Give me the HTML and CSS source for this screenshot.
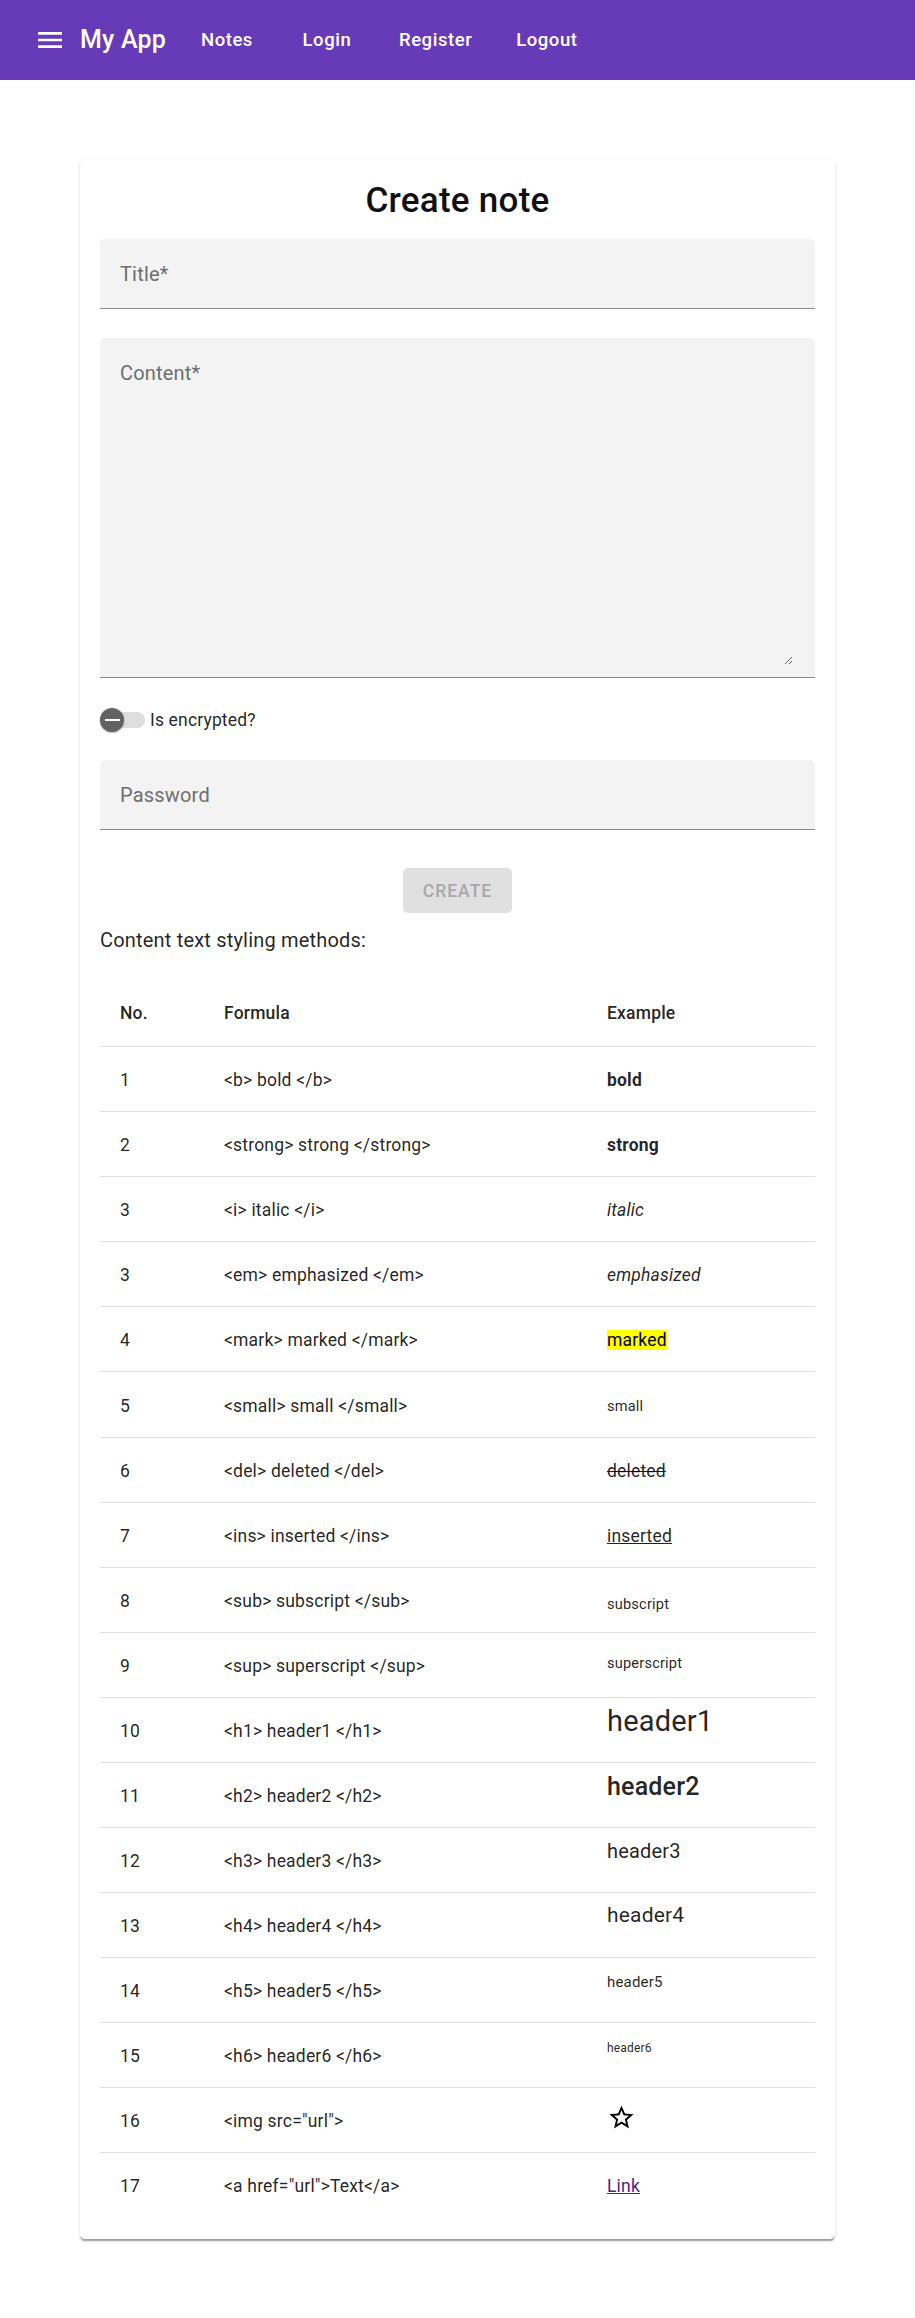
FILE: index.html
```html
<!DOCTYPE html>
<html lang="en">
<head>
<meta charset="utf-8">
<title>My App</title>
<link rel="stylesheet" href="styles.css">
</head>
<body>
<header class="appbar">
  <button class="menu-btn" type="button" aria-label="menu">
    <svg class="menu-icon" viewBox="0 0 24 24" width="32" height="32"><path d="M3 18h18v-2H3v2zm0-5h18v-2H3v2zm0-7v2h18V6H3z"/></svg>
  </button>
  <div class="brand">My App</div>
  <nav class="nav">
    <a class="nav-btn" href="#">Notes</a>
    <a class="nav-btn" href="#">Login</a>
    <a class="nav-btn" href="#">Register</a>
    <a class="nav-btn" href="#">Logout</a>
  </nav>
</header>

<main class="page">
  <section class="card">
    <h1 class="card-title">Create note</h1>

    <div class="field field-title">
      <input class="field-input" type="text" placeholder="Title*">
    </div>

    <div class="field field-content">
      <textarea class="field-textarea" placeholder="Content*"></textarea>
    </div>

    <label class="switch">
      <span class="switch-ctl">
        <input class="switch-input" type="checkbox">
        <span class="switch-track"></span>
        <span class="switch-thumb"><span class="switch-minus"></span></span>
      </span>
      <span class="switch-text">Is encrypted?</span>
    </label>

    <div class="field field-password">
      <input class="field-input" type="password" placeholder="Password">
    </div>

    <button class="create-btn" type="button" disabled>CREATE</button>

    <p class="methods-label">Content text styling methods:</p>

    <table class="methods">
      <colgroup>
        <col class="col-no">
        <col class="col-formula">
        <col class="col-example">
      </colgroup>
      <thead>
        <tr><th>No.</th><th>Formula</th><th>Example</th></tr>
      </thead>
      <tbody>
        <tr><td>1</td><td>&lt;b&gt; bold &lt;/b&gt;</td><td><b>bold</b></td></tr>
        <tr><td>2</td><td>&lt;strong&gt; strong &lt;/strong&gt;</td><td><strong>strong</strong></td></tr>
        <tr><td>3</td><td>&lt;i&gt; italic &lt;/i&gt;</td><td><i>italic</i></td></tr>
        <tr><td>3</td><td>&lt;em&gt; emphasized &lt;/em&gt;</td><td><em>emphasized</em></td></tr>
        <tr><td>4</td><td>&lt;mark&gt; marked &lt;/mark&gt;</td><td><mark class="ex-mark">marked</mark></td></tr>
        <tr><td>5</td><td>&lt;small&gt; small &lt;/small&gt;</td><td><small class="ex-small">small</small></td></tr>
        <tr><td>6</td><td>&lt;del&gt; deleted &lt;/del&gt;</td><td><del>deleted</del></td></tr>
        <tr><td>7</td><td>&lt;ins&gt; inserted &lt;/ins&gt;</td><td><ins>inserted</ins></td></tr>
        <tr><td>8</td><td>&lt;sub&gt; subscript &lt;/sub&gt;</td><td><sub class="ex-sub">subscript</sub></td></tr>
        <tr><td>9</td><td>&lt;sup&gt; superscript &lt;/sup&gt;</td><td><sup class="ex-sup">superscript</sup></td></tr>
        <tr><td>10</td><td>&lt;h1&gt; header1 &lt;/h1&gt;</td><td class="ex-top"><h1 class="ex-h ex-h1">header1</h1></td></tr>
        <tr><td>11</td><td>&lt;h2&gt; header2 &lt;/h2&gt;</td><td class="ex-top"><h2 class="ex-h ex-h2">header2</h2></td></tr>
        <tr><td>12</td><td>&lt;h3&gt; header3 &lt;/h3&gt;</td><td class="ex-top"><h3 class="ex-h ex-h3">header3</h3></td></tr>
        <tr><td>13</td><td>&lt;h4&gt; header4 &lt;/h4&gt;</td><td class="ex-top"><h4 class="ex-h ex-h4">header4</h4></td></tr>
        <tr><td>14</td><td>&lt;h5&gt; header5 &lt;/h5&gt;</td><td class="ex-top"><h5 class="ex-h ex-h5">header5</h5></td></tr>
        <tr><td>15</td><td>&lt;h6&gt; header6 &lt;/h6&gt;</td><td class="ex-top"><h6 class="ex-h ex-h6">header6</h6></td></tr>
        <tr><td>16</td><td>&lt;img src="url"&gt;</td><td class="ex-top"><svg class="ex-star" viewBox="0 0 24 24" width="29" height="29" role="img" aria-label="star"><path d="M22 9.24l-7.19-.62L12 2 9.19 8.63 2 9.24l5.46 4.73L5.82 21 12 17.27 18.18 21l-1.63-7.03L22 9.24zM12 15.4l-3.76 2.27 1-4.28-3.32-2.88 4.38-.38L12 6.1l1.71 4.040 4.38.38-3.32 2.88 1 4.28L12 15.4z"/></svg></td></tr>
        <tr><td>17</td><td>&lt;a href="url"&gt;Text&lt;/a&gt;</td><td><a class="ex-link" href="#">Link</a></td></tr>
      </tbody>
    </table>
  </section>
</main>
</body>
</html>
```

FILE: styles.css
```css
* {
  box-sizing: border-box;
}

body {
  margin: 0;
  background: #ffffff;
  font-family: Roboto, "Noto Sans", Arial, sans-serif;
  color: rgba(0, 0, 0, 0.87);
}

/* ---------- App bar ---------- */
.appbar {
  display: flex;
  align-items: center;
  height: 80px;
  padding-left: 34px;
  background: #673ab7;
  color: #ffffff;
}

.menu-btn {
  display: flex;
  width: 32px;
  height: 32px;
  padding: 0;
  margin-right: 14px;
  border: 0;
  background: none;
}

.menu-icon {
  fill: #ffffff;
}

.brand {
  font-size: 25px;
  font-weight: 500;
  letter-spacing: 0.19px;
  line-height: 1.6;
  margin-right: 21px;
}

.nav {
  display: flex;
  gap: 20px;
}

.nav-btn {
  display: inline-flex;
  align-items: center;
  justify-content: center;
  min-width: 80px;
  height: 45px;
  padding: 0 12px;
  color: #ffffff;
  text-decoration: none;
  font-size: 18.5px;
  font-weight: 500;
  letter-spacing: 0.55px;
}

/* ---------- Card ---------- */
.page {
  padding: 80px 80px 80px;
}

.card {
  display: flex;
  flex-direction: column;
  padding: 20px 20px 22px;
  border-radius: 5px;
  background: #ffffff;
  box-shadow: 0 2.5px 1.25px -1.25px rgba(0, 0, 0, 0.2),
              0 1.25px 1.25px 0 rgba(0, 0, 0, 0.14),
              0 1.25px 3.75px 0 rgba(0, 0, 0, 0.12);
}

.card-title {
  margin: 0 0 18px;
  font-size: 35px;
  font-weight: 500;
  letter-spacing: 0.25px;
  line-height: 41px;
  text-align: center;
  color: #111111;
}

/* ---------- Fields ---------- */
.field {
  display: flex;
  height: 70px;
  background: #f3f3f3;
  border-radius: 5px 5px 0 0;
  border-bottom: 1px solid #8c8c8c;
}

.field-content {
  height: 340px;
  margin-top: 29px;
  padding: 0 22px 12px 0;
}

.field-password {
  margin-top: 28px;
}

.field-input,
.field-textarea {
  width: 100%;
  height: 100%;
  border: 0;
  outline: none;
  background: transparent;
  font-family: Roboto, "Noto Sans", Arial, sans-serif;
  font-size: 20px;
  letter-spacing: 0.19px;
  color: rgba(0, 0, 0, 0.87);
}

.field-input {
  padding: 0 20px;
}

.field-textarea {
  padding: 23px 0 0 20px;
  line-height: 24px;
  resize: vertical;
}

.field-input::placeholder,
.field-textarea::placeholder {
  color: #6e6e6e;
  opacity: 1;
}

/* ---------- Switch ---------- */
.switch {
  display: flex;
  align-items: center;
  margin-top: 30px;
  height: 24px;
}

.switch-ctl {
  display: grid;
  align-items: center;
  width: 45px;
  height: 24px;
}

.switch-input {
  display: none;
}

.switch-track,
.switch-thumb {
  grid-area: 1 / 1;
}

.switch-track {
  justify-self: end;
  width: 42px;
  height: 16px;
  border-radius: 8px;
  background: #dedede;
}

.switch-thumb {
  justify-self: start;
  display: flex;
  align-items: center;
  justify-content: center;
  width: 24px;
  height: 24px;
  border-radius: 50%;
  background: #626262;
  box-shadow: 0 1px 2px rgba(0, 0, 0, 0.3);
}

.switch-minus {
  width: 15px;
  height: 2px;
  background: #ffffff;
}

.switch-text {
  margin-left: 5px;
  font-size: 17.5px;
  letter-spacing: 0.16px;
  color: rgba(0, 0, 0, 0.87);
}

/* ---------- Button ---------- */
.create-btn {
  align-self: center;
  margin-top: 38px;
  height: 45px;
  padding: 0 20px;
  border: 0;
  border-radius: 5px;
  background: #e0e0e0;
  color: #a8a8a8;
  font-family: Roboto, "Noto Sans", Arial, sans-serif;
  font-size: 17.5px;
  font-weight: 500;
  letter-spacing: 1px;
}

.methods-label {
  margin: 15px 0 0;
  font-size: 20px;
  letter-spacing: 0.19px;
  line-height: 24px;
  color: rgba(0, 0, 0, 0.87);
}

/* ---------- Table ---------- */
.methods {
  width: 100%;
  margin-top: 27px;
  table-layout: fixed;
  border-collapse: separate;
  border-spacing: 0;
  font-size: 17.5px;
  letter-spacing: 0.19px;
  color: rgba(0, 0, 0, 0.87);
}

.col-no { width: 104px; }
.col-formula { width: 383px; }

.methods th {
  padding: 19px 20px 18px;
  line-height: 30px;
  font-weight: 500;
  text-align: left;
  border-bottom: 1px solid #e0e0e0;
}

.methods td {
  padding: 21px 20px 18px;
  line-height: 25px;
  vertical-align: middle;
  border-bottom: 1px solid #e0e0e0;
}

.methods tbody tr:last-child td {
  border-bottom: 0;
}

.methods td.ex-top {
  vertical-align: top;
  padding-top: 0;
}

.ex-mark {
  background: #ffff00;
  color: #000000;
}

.ex-small {
  font-size: 14.6px;
}

.ex-sub,
.ex-sup {
  font-size: 14.6px;
  line-height: 1;
}

.ex-sub {
  vertical-align: -2px;
}

.ex-sup {
  vertical-align: 4px;
}

.ex-h {
  margin: 0;
  line-height: 1;
  color: rgba(0, 0, 0, 0.87);
}

.ex-h1 { font-size: 29px; font-weight: 400; margin-top: 9px; }
.ex-h2 { font-size: 25px; font-weight: 500; margin-top: 11px; }
.ex-h3 { font-size: 20px; font-weight: 400; margin-top: 13px; }
.ex-h4 { font-size: 21px; font-weight: 400; margin-top: 12px; }
.ex-h5 { font-size: 15px; font-weight: 400; margin-top: 17px; }
.ex-h6 { font-size: 12px; font-weight: 400; margin-top: 19px; }

.ex-star {
  display: block;
  margin-top: 15px;
  fill: #000000;
}

.ex-link {
  color: #551a8b;
}
```
